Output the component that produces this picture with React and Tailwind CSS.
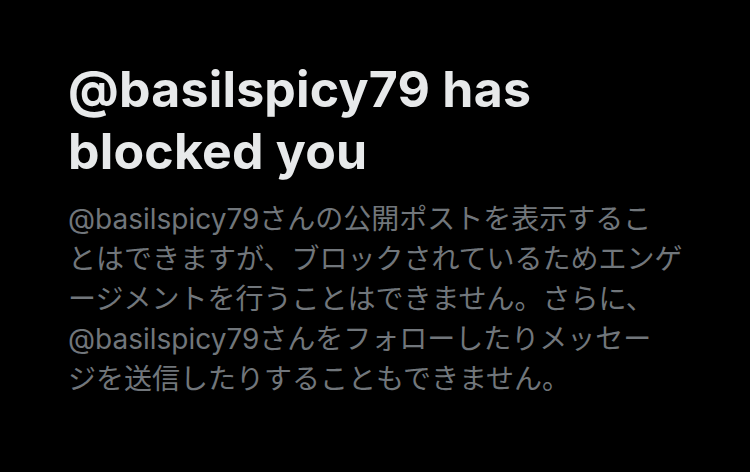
export default function App() {
  return (
    <div className="w-[750px] h-[472px] bg-black overflow-hidden">
      <div className="pl-[68px] pr-[40px] pt-[58px]">
        <h1 className="font-['Inter','Noto_Sans_CJK_JP',sans-serif] font-bold text-[50px] leading-[62px] tracking-[0.2px] text-[#e7e9ea]">
          @basilspicy79 has
          <br />
          blocked you
        </h1>
        <p className="mt-[17px] font-['Inter','Noto_Sans_CJK_JP',sans-serif] text-[28px] leading-[40px] text-[#71767b]">
          @basilspicy79さんの公開ポストを表示するこ
          <br />
          とはできますが、ブロックされているためエンゲ
          <br />
          ージメントを行うことはできません。さらに、
          <br />
          @basilspicy79さんをフォローしたりメッセー
          <br />
          ジを送信したりすることもできません。
        </p>
      </div>
    </div>
  )
}
